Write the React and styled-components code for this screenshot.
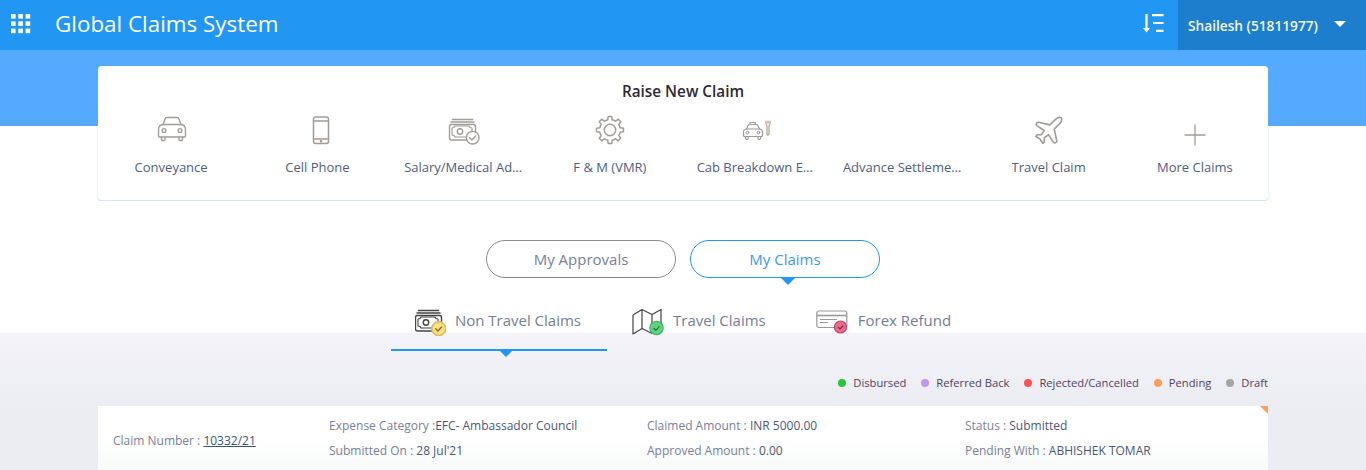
import React from 'react';
import styled, { createGlobalStyle } from 'styled-components';

const Global = createGlobalStyle`
  html, body { margin: 0; padding: 0; height: 470px; overflow: hidden; background: #fff; }
  body { font-family: "Open Sans", "Liberation Sans", sans-serif; }
  * { box-sizing: border-box; }
`;

const Header = styled.header`
  height: 50px; background: #2196f3; display: flex; align-items: center; color: #fff;
`;
const AppsButton = styled.div`
  width: 55px; padding-left: 11px; display: flex; align-items: center; margin-top: -2px;
`;
const Title = styled.h1`
  margin: 0 0 3px; font-size: 22.4px; font-weight: 400; line-height: 47px; flex: 1; color: #fff;
`;
const SortButton = styled.div`
  width: 21px; margin-right: 14px; display: flex; align-items: center; margin-top: -2px;
`;
const UserMenu = styled.div`
  width: 188px; height: 50px; background: #1d7ecd; display: flex; align-items: center;
  justify-content: space-between; padding: 0 20px 0 10px; font-size: 13.7px; font-weight: 600; color: #f2f8fd;
`;
const Caret = styled.span`
  width: 0; height: 0; border-left: 6px solid transparent; border-right: 6px solid transparent;
  border-top: 6px solid #fff; margin-top: -3px;
`;

const Hero = styled.section`
  padding: 16px 98px 0;
  background: linear-gradient(#54aaff 0, #54aaff 76px, #fff 76px);
`;
const ClaimCard = styled.div`
  height: 135px; background: #fff; border-radius: 4px; border-bottom: 1px solid #d5e5f5;
  box-shadow: 0 0 2px rgba(120,170,220,.55); padding-top: 15px;
`;
const CardTitle = styled.h2`
  margin: 0; text-align: center; font-size: 15.3px; line-height: 21px; font-weight: 600; color: #2b2b33;
`;
const ClaimGrid = styled.div`
  display: grid; grid-template-columns: repeat(8, 1fr); margin-top: 13px;
`;
const ClaimItem = styled.div`
  display: flex; flex-direction: column; align-items: center;
`;
const ClaimLabel = styled.span`
  display: block; max-width: 119px; margin-top: 10px; font-size: 13px; line-height: 20px; color: #4f5d80;
  white-space: nowrap; overflow: hidden; text-overflow: ellipsis;
`;

const Lower = styled.main`
  height: 269px; padding-top: 39px;
  background: linear-gradient(#fff 0, #fff 132px, #f3f3f8 132px, #ecedf3 205px);
`;
const Toggles = styled.div`
  display: flex; justify-content: center; gap: 14px;
`;
const Toggle = styled.button`
  position: relative; width: 190px; height: 38px; border-radius: 19px; background: #fff;
  font: 400 15px "Open Sans", sans-serif; padding: 0;
  color: ${p => (p.$active ? '#3f97f6' : '#78809a')};
  border: 1px solid ${p => (p.$active ? '#2196f3' : '#8a8a8a')};
  ${p => p.$active && `
    &::after {
      content: ''; position: absolute; left: 50%; bottom: -8px; margin-left: -5px;
      border-left: 8px solid transparent; border-right: 8px solid transparent; border-top: 8px solid #2196f3;
    }
  `}
`;
const Tabs = styled.div`
  display: flex; justify-content: center; margin-top: 28px; padding-left: 1px;
`;
const Tab = styled.div`
  position: relative; height: 45px; padding: 2px 25px 0; display: flex; align-items: flex-start; gap: ${p => p.$gap}px;
  font-size: 15px; line-height: 22px; color: #757d99;
  ${p => p.$active && `
    padding: 2px 26px 0 24px;
    border-bottom: 2px solid #2196f3;
    &::after {
      content: ''; position: absolute; left: 50%; bottom: -8px; margin-left: 1px;
      border-left: 6px solid transparent; border-right: 6px solid transparent; border-top: 6px solid #2196f3;
    }
  `}
`;
const TabText = styled.span`
  padding-top: 1px; white-space: nowrap;
`;
const Legend = styled.div`
  width: 1170px; margin: 24px auto 0; display: flex; justify-content: flex-end; gap: 15px;
  font-size: 11.2px; line-height: 16px; color: #4f4360;
`;
const LegendItem = styled.span`
  display: flex; align-items: center; gap: 7px;
`;
const Dot = styled.i`
  width: 8px; height: 8px; border-radius: 50%; background: ${p => p.$c};
`;
const RowCard = styled.article`
  position: relative; width: 1170px; height: 70px; margin: 15px auto 0; padding: 8px 0 0 15px;
  background: linear-gradient(#fff 30px, #f7faf9 64px);
  display: grid; grid-template-columns: 216px 318px 318px 1fr;
  font-size: 12px; line-height: 24px; color: #7a7f98;
  &::after {
    content: ''; position: absolute; top: 0; right: 0;
    border-top: 8px solid #ff9d5c; border-left: 8px solid transparent;
  }
`;
const Cell = styled.div`
  white-space: nowrap; padding-top: ${p => (p.$center ? 15 : 0)}px;
  & > div + div { margin-top: 1px; }
`;
const Value = styled.span`color: #4b5876;`;
const ClaimLink = styled.a`color: #3c5480; text-decoration: underline;`;

const gearPath = (() => {
  const cx = 20, cy = 15, teeth = 8, R = 13.6, r = 10.4;
  let d = '';
  for (let i = 0; i < teeth; i++) {
    const a = (i / teeth) * Math.PI * 2 - Math.PI / 2;
    const s = (Math.PI * 2) / teeth;
    const pts = [[r, -0.5 * s], [r, -0.27 * s], [R, -0.17 * s], [R, 0.17 * s], [r, 0.27 * s]];
    pts.forEach(([rad, o], j) => {
      const x = cx + rad * Math.cos(a + o), y = cy + rad * Math.sin(a + o);
      d += `${i === 0 && j === 0 ? 'M' : 'L'}${x.toFixed(2)} ${y.toFixed(2)} `;
    });
  }
  return d + 'Z';
})();

const G = '#a09c98';
const Ico = ({ children }) => (
  <svg width="40" height="32" viewBox="0 0 40 32" fill="none" stroke={G} strokeWidth="1.4" strokeLinejoin="round" strokeLinecap="round">{children}</svg>
);

const CarIcon = () => (
  <Ico>
    <path d="M12 9.500 14 4q.5-1.500 2-1.500h10q1.500 0 2 1.500l2 5.500" />
    <path d="M12 9.500h18q4.500.5 4.500 5v6.500q0 1-1 1h-25q-1 0-1-1v-6.500q0-4.500 4.500-5z" />
    <path d="M10.500 22.500v2q0 1 1 1h1.500q1 0 1-1v-2M28 22.500v2q0 1 1 1h1.500q1 0 1-1v-2" />
    <circle cx="13" cy="15.500" r="1.900" /><circle cx="29" cy="15.500" r="1.900" />
  </Ico>
);
const PhoneIcon = () => (
  <Ico>
    <rect x="16.500" y="2" width="15" height="26.500" rx="2" strokeWidth="1.500" />
    <path d="M16.500 6h15M16.500 24h15" />
    <circle cx="24" cy="26.200" r=".6" fill={G} />
  </Ico>
);
const MoneyIcon = ({ stroke = G, badge = '#fff', check = G, bs = G, r = 6.3, width = 40, height = 32, box = '0 0 40 32' }) => (
  <svg width={width} height={height} viewBox={box} fill="none" stroke={stroke} strokeWidth="1.4" strokeLinejoin="round" strokeLinecap="round">
    <path d="M8.500 4.500h20M7 7h23" strokeWidth="1.600" />
    <rect x="5.500" y="9.500" width="26" height="15.500" rx="2" />
    <path d="M8 13q2.500 0 3-2h14q.5 2 3 2v7q-2.500 0-3 2H11q-.5-2-3-2z" strokeWidth="1.100" />
    <circle cx="16" cy="16.500" r="2.700" />
    <circle cx="28.700" cy="22.700" r={r} fill={badge} stroke={bs} />
    <path d="m25.700 22.700 2.200 2.200 3.800-4" stroke={check} />
  </svg>
);
const GearIcon = () => (
  <Ico>
    <path d={gearPath} strokeWidth="1.500" />
    <circle cx="20" cy="15" r="5.700" strokeWidth="1.500" />
  </Ico>
);
const CabIcon = () => (
  <Ico>
    <path d="M14 9.500V7.500h5.500v2M10.500 14l1.500-3.500q.4-1 1.500-1h7q1.100 0 1.500 1L23.500 14" strokeWidth="1.200" />
    <path d="M10 14h14q2.500.5 2.500 3v3.500q0 1-1 1H8.500q-1 0-1-1V17q0-2.500 2.500-3z" strokeWidth="1.200" />
    <path d="M9.500 21.500v2q0 .8.800.8h1q.8 0 .8-.8v-2M22 21.500v2q0 .8.800.8h1q.8 0 .8-.8v-2" strokeWidth="1.200" />
    <circle cx="11.500" cy="17.500" r="1.300" strokeWidth="1" /><circle cx="22.500" cy="17.500" r="1.300" strokeWidth="1" />
    <path d="M30 6v3q0 1.500 1 1.500V19q0 1 1 1t1-1v-8.500q1 0 1-1.500V6M32 6v2.500" stroke="#a89a80" strokeWidth="1.100" />
  </Ico>
);
const PlaneIcon = () => (
  <Ico>
    <g transform="translate(2.500 -1.500) scale(1.420)">
      <path d="M17.800 19.200 16 11l3.500-3.500C21 6 21.500 4 21 3c-1-.5-3 0-4.500 1.500L13 8 4.800 6.200c-.5-.1-.9.1-1.100.5l-.3.5c-.2.5-.1 1 .3 1.300L9 12l-2 3H4l-1 1 3 2 2 3 1-1v-3l3-2 3.500 5.300c.3.4.8.5 1.300.3l.5-.2c.4-.3.6-.7.5-1.200z" strokeWidth="1.150" />
    </g>
  </Ico>
);
const PlusIcon = () => (
  <Ico>
    <path d="M9.500 20h21M20 9.500v21" strokeWidth="1.300" strokeLinecap="butt" />
  </Ico>
);
const MapIcon = () => (
  <svg width="32" height="28" viewBox="0 0 32 28" fill="none" stroke="#444" strokeWidth="1.200" strokeLinejoin="round">
    <path d="M1 7 10 1.500l10 5 9-5v16M20 6.500v14M10 1.500v19M1 7v19l9-5.500 10 5" />
    <circle cx="24.500" cy="20" r="6.700" fill="#5fd37f" stroke="#45b568" />
    <path d="m21.500 20 2.300 2.300 3.700-4" stroke="#2c6a40" />
  </svg>
);
const CardIcon = () => (
  <svg width="32" height="28" viewBox="0 0 32 28" fill="none" stroke="#999" strokeWidth="1.200" strokeLinejoin="round">
    <rect x=".8" y="3" width="30" height="16.500" rx="2" />
    <path d="M.8 7.500h30" strokeWidth="1.600" />
    <path d="M4 11.500h17M4 14.500h8" strokeWidth="1" />
    <circle cx="24.500" cy="19" r="6" fill="#ee6a8c" stroke="#b74b69" />
    <path d="m22 19 2 2 3.300-3.500" stroke="#8a2a45" />
  </svg>
);

const claims = [
  ['Conveyance', CarIcon], ['Cell Phone', PhoneIcon], ['Salary/Medical Advance', MoneyIcon],
  ['F & M (VMR)', GearIcon], ['Cab Breakdown Expense', CabIcon], ['Advance Settlement', () => <Ico />],
  ['Travel Claim', PlaneIcon], ['More Claims', PlusIcon],
];
const legend = [
  ['Disbursed', '#22c73d'], ['Referred Back', '#c394ee'], ['Rejected/Cancelled', '#ff5252'],
  ['Pending', '#ff9d5c'], ['Draft', '#a5a5a5'],
];

export default function App() {
  return (
    <>
      <Global />
      <Header>
        <AppsButton>
          <svg width="20" height="20" viewBox="0 0 20 20" fill="#fff">
            {[0, 7.300, 14.600].flatMap(y => [0, 7.300, 14.600].map(x => <rect key={`${x}-${y}`} x={x} y={y} width="4.600" height="4.600" />))}
          </svg>
        </AppsButton>
        <Title>Global Claims System</Title>
        <SortButton>
          <svg width="21" height="20" viewBox="0 0 21 20" fill="none" stroke="#fff" strokeWidth="2.200">
            <path d="M3.500 0v17" />
            <path d="M0 14h7l-3.500 4.500z" fill="#fff" stroke="none" />
            <path d="M9 1.200h11.500M10 9h10.500M13 16.800h7.500" />
          </svg>
        </SortButton>
        <UserMenu>
          Shailesh (51811977)
          <Caret />
        </UserMenu>
      </Header>
      <Hero>
        <ClaimCard>
          <CardTitle>Raise New Claim</CardTitle>
          <ClaimGrid>
            {claims.map(([label, Icon]) => (
              <ClaimItem key={label}>
                <Icon />
                <ClaimLabel>{label}</ClaimLabel>
              </ClaimItem>
            ))}
          </ClaimGrid>
        </ClaimCard>
      </Hero>
      <Lower>
        <Toggles>
          <Toggle>My Approvals</Toggle>
          <Toggle $active>My Claims</Toggle>
        </Toggles>
        <Tabs>
          <Tab $active $gap={9}>
            <MoneyIcon stroke="#444" badge="#fbdf86" check="#8a7420" bs="#d9b95c" r={6.9} width={31} height={28} box="5 2 31 28" />
            <TabText>Non Travel Claims</TabText>
          </Tab>
          <Tab $gap={9}>
            <MapIcon />
            <TabText>Travel Claims</TabText>
          </Tab>
          <Tab $gap={10}>
            <CardIcon />
            <TabText>Forex Refund</TabText>
          </Tab>
        </Tabs>
        <Legend>
          {legend.map(([label, c]) => (
            <LegendItem key={label}><Dot $c={c} />{label}</LegendItem>
          ))}
        </Legend>
        <RowCard>
          <Cell $center>Claim Number : <ClaimLink>10332/21</ClaimLink></Cell>
          <Cell>
            <div>Expense Category :<Value>EFC- Ambassador Council</Value></div>
            <div>Submitted On : <Value>28 Jul'21</Value></div>
          </Cell>
          <Cell>
            <div>Claimed Amount : <Value>INR 5000.00</Value></div>
            <div>Approved Amount : <Value>0.00</Value></div>
          </Cell>
          <Cell>
            <div>Status : <Value>Submitted</Value></div>
            <div>Pending With : <Value>ABHISHEK TOMAR</Value></div>
          </Cell>
        </RowCard>
      </Lower>
    </>
  );
}
